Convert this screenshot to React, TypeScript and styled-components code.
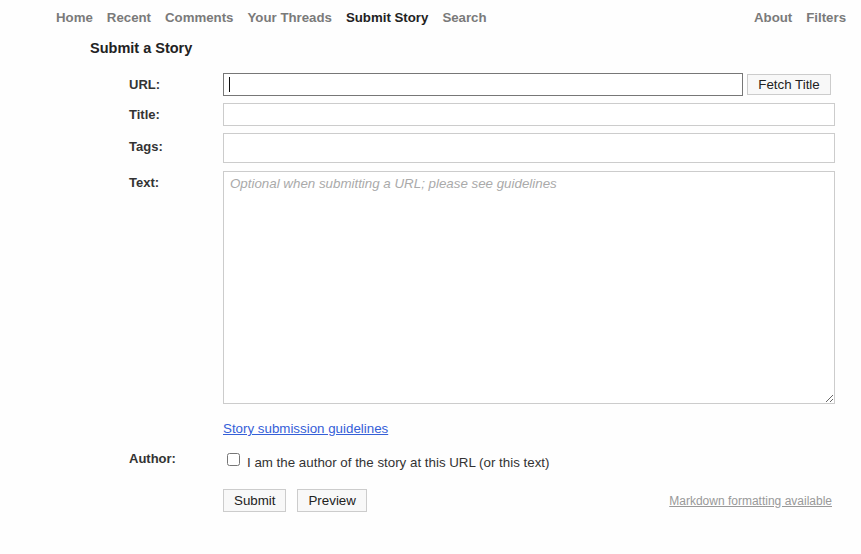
import React from "react";
import styled, { createGlobalStyle } from "styled-components";

const GlobalStyle = createGlobalStyle`
  body {
    margin: 0;
    background: #fefefe;
    font-family: "Liberation Sans", Arial, sans-serif;
    color: #333;
  }
`;

const Nav = styled.nav`
  display: flex;
  justify-content: space-between;
  padding: 10px 15px 0 56px;
  line-height: 15px;
`;

const NavGroup = styled.div`
  display: flex;
  gap: 14px;
`;

const NavLink = styled.a<{ $current?: boolean }>`
  font-size: 13.25px;
  font-weight: bold;
  color: ${(p) => (p.$current ? "#222" : "#7a7a7a")};
  text-decoration: none;
  cursor: pointer;
`;

const Main = styled.main`
  padding-left: 90px;
`;

const Heading = styled.h2`
  margin: 15px 0 0;
  font-size: 14.5px;
  line-height: 17px;
  font-weight: bold;
  color: #222;
`;

const Form = styled.form`
  margin: 16px 0 0 39px;
  display: flex;
  flex-direction: column;
`;

const Row = styled.div<{ $gap?: number }>`
  display: flex;
  align-items: flex-start;
  margin-top: ${(p) => p.$gap ?? 0}px;
`;

const Label = styled.label<{ $pad?: number }>`
  width: 94px;
  flex-shrink: 0;
  padding-top: ${(p) => p.$pad ?? 4}px;
  font-size: 13px;
  line-height: 15px;
  font-weight: bold;
  color: #333;
`;

const Field = styled.div`
  width: 612px;
  display: flex;
  align-items: center;
`;

const InputWrap = styled.div<{ $w?: number }>`
  position: relative;
  display: flex;
  ${(p) => (p.$w ? `width: ${p.$w}px;` : "flex: 1;")}
`;

const Caret = styled.span`
  position: absolute;
  left: 6px;
  top: 4px;
  width: 1px;
  height: 15px;
  background: #111;
`;

const TextInput = styled.input<{ $h?: number; $focus?: boolean }>`
  box-sizing: border-box;
  width: 100%;
  height: ${(p) => p.$h ?? 23}px;
  margin: 0;
  padding: 2px 5px;
  border: 1px solid ${(p) => (p.$focus ? "#777" : "#ccc")};
  border-radius: 0;
  background: #fff;
  font: 13.33px "Liberation Sans", Arial, sans-serif;
  color: #222;
  caret-color: transparent;
  &:focus {
    outline: none;
  }
`;

const TextArea = styled.textarea`
  box-sizing: border-box;
  width: 612px;
  height: 233px;
  margin: 0;
  padding: 4px 6px;
  border: 1px solid #ccc;
  border-radius: 0;
  background: #fff;
  font: 13.33px "Liberation Sans", Arial, sans-serif;
  color: #222;
  &::placeholder {
    color: #aaa;
    font-style: italic;
  }
  &:focus {
    outline: none;
  }
`;

const Button = styled.button<{ $h?: number }>`
  box-sizing: border-box;
  height: ${(p) => p.$h ?? 23}px;
  margin: 0;
  padding: 0 10px;
  border: 1px solid #ccc;
  border-radius: 0;
  background: #f8f8f8;
  font: 13.33px "Liberation Sans", Arial, sans-serif;
  color: #222;
  cursor: pointer;
`;

const FetchButton = styled(Button)`
  margin-left: 4px;
  width: 84px;
  padding: 0;
`;

const GuideLink = styled.a`
  font-size: 13.33px;
  line-height: 15px;
  color: #3560d8;
  text-decoration: underline;
`;

const CheckLabel = styled.label`
  display: flex;
  align-items: flex-start;
  font-size: 13.33px;
  line-height: 15px;
  color: #333;
`;

const CheckBox = styled.input`
  width: 13px;
  height: 13px;
  margin: 2px 7px 0 4px;
`;

const CheckText = styled.span`
  padding-top: 4px;
`;

const ButtonRow = styled.div`
  width: 612px;
  display: flex;
  align-items: center;
  gap: 11px;
`;

const Hint = styled.a`
  margin-left: auto;
  margin-right: 3px;
  font-size: 12px;
  color: #999;
  text-decoration: underline;
`;

const Spacer = styled.div`
  width: 94px;
  flex-shrink: 0;
`;

const leftLinks = ["Home", "Recent", "Comments", "Your Threads", "Submit Story", "Search"];
const rightLinks = ["About", "Filters"];

export default function App() {
  return (
    <>
      <GlobalStyle />
      <Nav>
        <NavGroup>
          {leftLinks.map((l) => (
            <NavLink key={l} $current={l === "Submit Story"}>
              {l}
            </NavLink>
          ))}
        </NavGroup>
        <NavGroup>
          {rightLinks.map((l) => (
            <NavLink key={l}>{l}</NavLink>
          ))}
        </NavGroup>
      </Nav>
      <Main>
        <Heading>Submit a Story</Heading>
        <Form onSubmit={(e) => e.preventDefault()}>
          <Row>
            <Label>URL:</Label>
            <Field>
              <InputWrap $w={520}>
                <TextInput $focus />
                <Caret />
              </InputWrap>
              <FetchButton type="button" $h={21}>
                Fetch Title
              </FetchButton>
            </Field>
          </Row>
          <Row $gap={7}>
            <Label>Title:</Label>
            <Field>
              <TextInput />
            </Field>
          </Row>
          <Row $gap={7}>
            <Label $pad={6}>Tags:</Label>
            <Field>
              <TextInput $h={30} />
            </Field>
          </Row>
          <Row $gap={8}>
            <Label>Text:</Label>
            <TextArea placeholder="Optional when submitting a URL; please see guidelines" />
          </Row>
          <Row $gap={17}>
            <Spacer />
            <GuideLink href="#">Story submission guidelines</GuideLink>
          </Row>
          <Row $gap={15}>
            <Label $pad={0}>Author:</Label>
            <CheckLabel>
              <CheckBox type="checkbox" />
              <CheckText>I am the author of the story at this URL (or this text)</CheckText>
            </CheckLabel>
          </Row>
          <Row $gap={19}>
            <Spacer />
            <ButtonRow>
              <Button type="submit">Submit</Button>
              <Button type="button">Preview</Button>
              <Hint href="#">Markdown formatting available</Hint>
            </ButtonRow>
          </Row>
        </Form>
      </Main>
    </>
  );
}
